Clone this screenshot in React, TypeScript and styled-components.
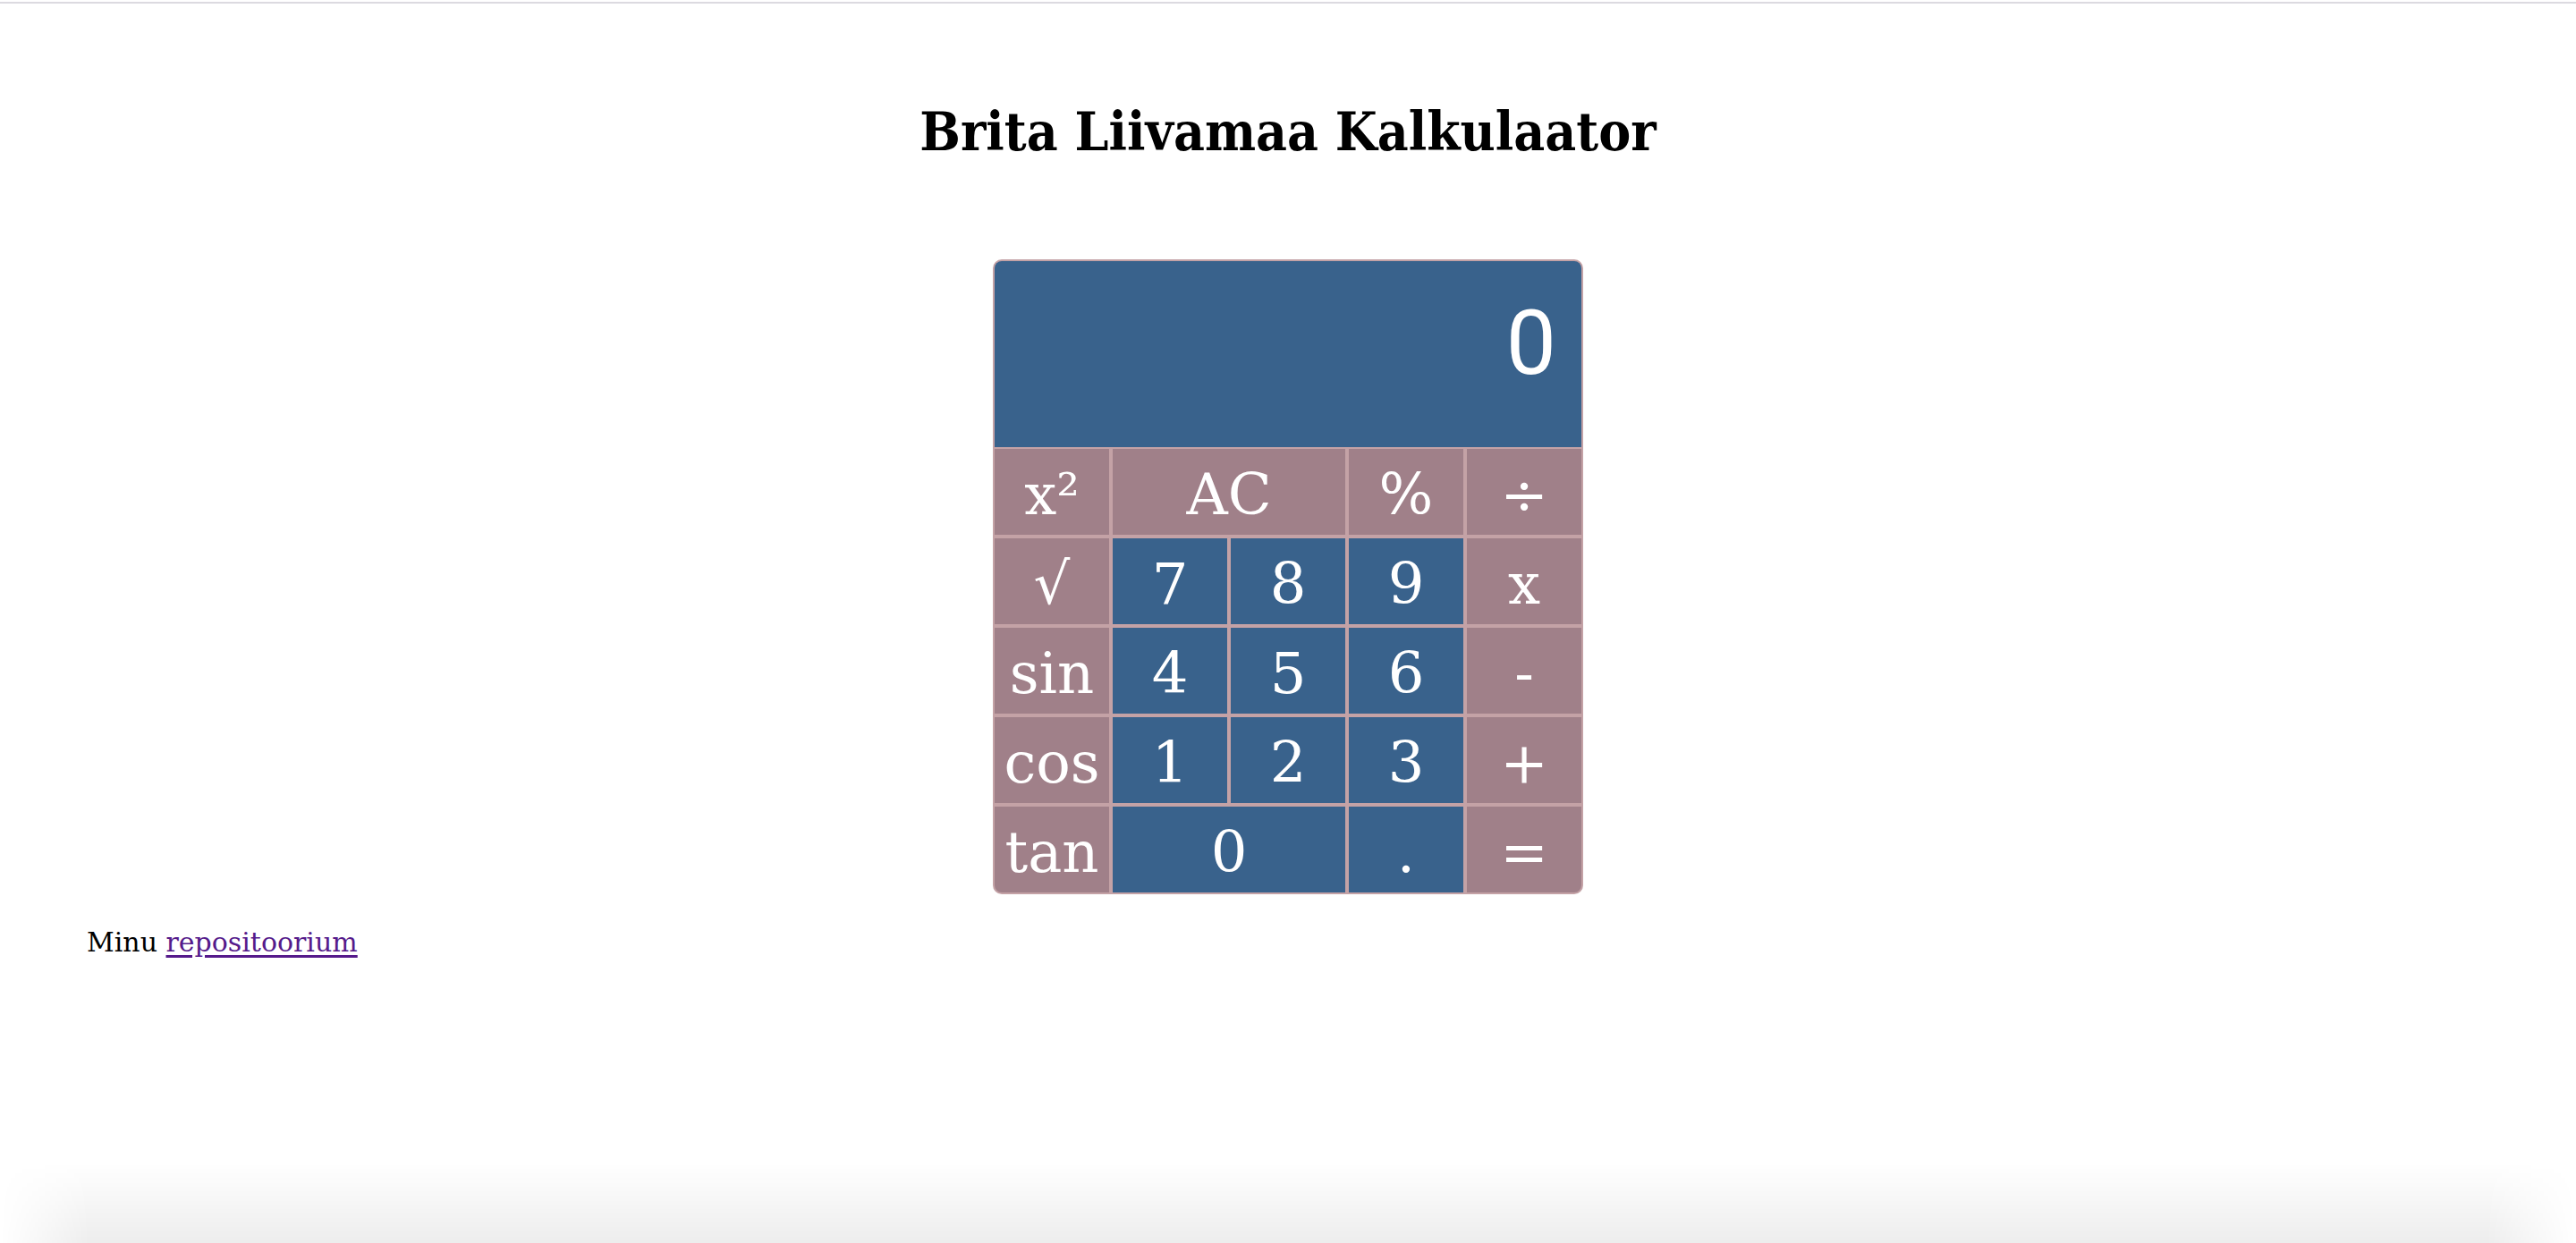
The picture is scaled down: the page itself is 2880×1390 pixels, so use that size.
import React from "react";
import styled, { createGlobalStyle } from "styled-components";

const GlobalStyle = createGlobalStyle`
  html, body {
    margin: 0;
    padding: 0;
    background: #ffffff;
  }
  body {
    font-family: "Roboto Slab", "DejaVu Serif", "Liberation Serif", serif;
    color: #000;
  }
`;

const Page = styled.div`
  margin-top: 2px;
  border-top: 2px solid #dcdae0;
  min-height: 1386px;
  box-sizing: border-box;
  display: flex;
  flex-direction: column;
`;

const Title = styled.h1`
  margin: 103px 0 0;
  text-align: center;
  font-family: "Roboto Slab", "DejaVu Serif Condensed", "DejaVu Serif", serif;
  font-size: 60px;
  line-height: 80px;
  font-weight: 700;
`;

const Calculator = styled.div`
  align-self: center;
  margin-top: 103px;
  width: 660px;
  box-sizing: border-box;
  border: 2px solid #c4a2a6;
  border-radius: 10px;
  overflow: hidden;
  background: #c4a2a6;
  display: flex;
  flex-direction: column;
  gap: 2px;
`;

const Display = styled.div`
  height: 208px;
  background: #39628c;
  color: #ffffff;
  display: flex;
  align-items: center;
  justify-content: flex-end;
  padding: 0 28px 26px 0;
  box-sizing: border-box;
  font-family: Roboto, "Liberation Sans", sans-serif;
  font-size: 100px;
  font-weight: 400;
`;

const Keys = styled.div`
  display: grid;
  grid-template-columns: repeat(5, 1fr);
  grid-auto-rows: 96px;
  gap: 4px;
`;

const Key = styled.button<{ $kind: "op" | "num"; $span?: number }>`
  grid-column: span ${(p) => p.$span ?? 1};
  border: none;
  margin: 0;
  padding: 5px 0 0;
  background: ${(p) => (p.$kind === "num" ? "#39628c" : "#a08089")};
  color: #ffffff;
  font-family: "Roboto Slab", "DejaVu Serif", "Liberation Serif", serif;
  font-size: 64px;
  font-weight: 400;
  line-height: 1;
  display: flex;
  align-items: center;
  justify-content: center;
  cursor: pointer;
`;

const Footer = styled.p`
  margin: 34px 0 0 97px;
  font-size: 30px;
  line-height: 40px;
`;

const RepoLink = styled.a`
  color: #551a8b;
  text-decoration: underline;
  text-underline-offset: 4px;
`;

const BottomFade = styled.div`
  position: fixed;
  left: 0;
  right: 0;
  bottom: 0;
  height: 90px;
  pointer-events: none;
  background: linear-gradient(to bottom, rgba(0, 0, 0, 0), rgba(0, 0, 0, 0.07));
  -webkit-mask-image: linear-gradient(to right, transparent 0, #000 100px, #000 calc(100% - 100px), transparent 100%);
  mask-image: linear-gradient(to right, transparent 0, #000 100px, #000 calc(100% - 100px), transparent 100%);
`;

type KeyDef = { label: string; kind: "op" | "num"; span?: number };

const keys: KeyDef[] = [
  { label: "x²", kind: "op" },
  { label: "AC", kind: "op", span: 2 },
  { label: "%", kind: "op" },
  { label: "÷", kind: "op" },
  { label: "√", kind: "op" },
  { label: "7", kind: "num" },
  { label: "8", kind: "num" },
  { label: "9", kind: "num" },
  { label: "x", kind: "op" },
  { label: "sin", kind: "op" },
  { label: "4", kind: "num" },
  { label: "5", kind: "num" },
  { label: "6", kind: "num" },
  { label: "-", kind: "op" },
  { label: "cos", kind: "op" },
  { label: "1", kind: "num" },
  { label: "2", kind: "num" },
  { label: "3", kind: "num" },
  { label: "+", kind: "op" },
  { label: "tan", kind: "op" },
  { label: "0", kind: "num", span: 2 },
  { label: ".", kind: "num" },
  { label: "=", kind: "op" },
];

export default function App() {
  return (
    <>
      <GlobalStyle />
      <Page>
        <Title>Brita Liivamaa Kalkulaator</Title>
        <Calculator>
          <Display>0</Display>
          <Keys>
            {keys.map((k, i) => (
              <Key key={i} $kind={k.kind} $span={k.span}>
                {k.label}
              </Key>
            ))}
          </Keys>
        </Calculator>
        <Footer>
          Minu <RepoLink href="#">repositoorium</RepoLink>
        </Footer>
      </Page>
      <BottomFade />
    </>
  );
}
